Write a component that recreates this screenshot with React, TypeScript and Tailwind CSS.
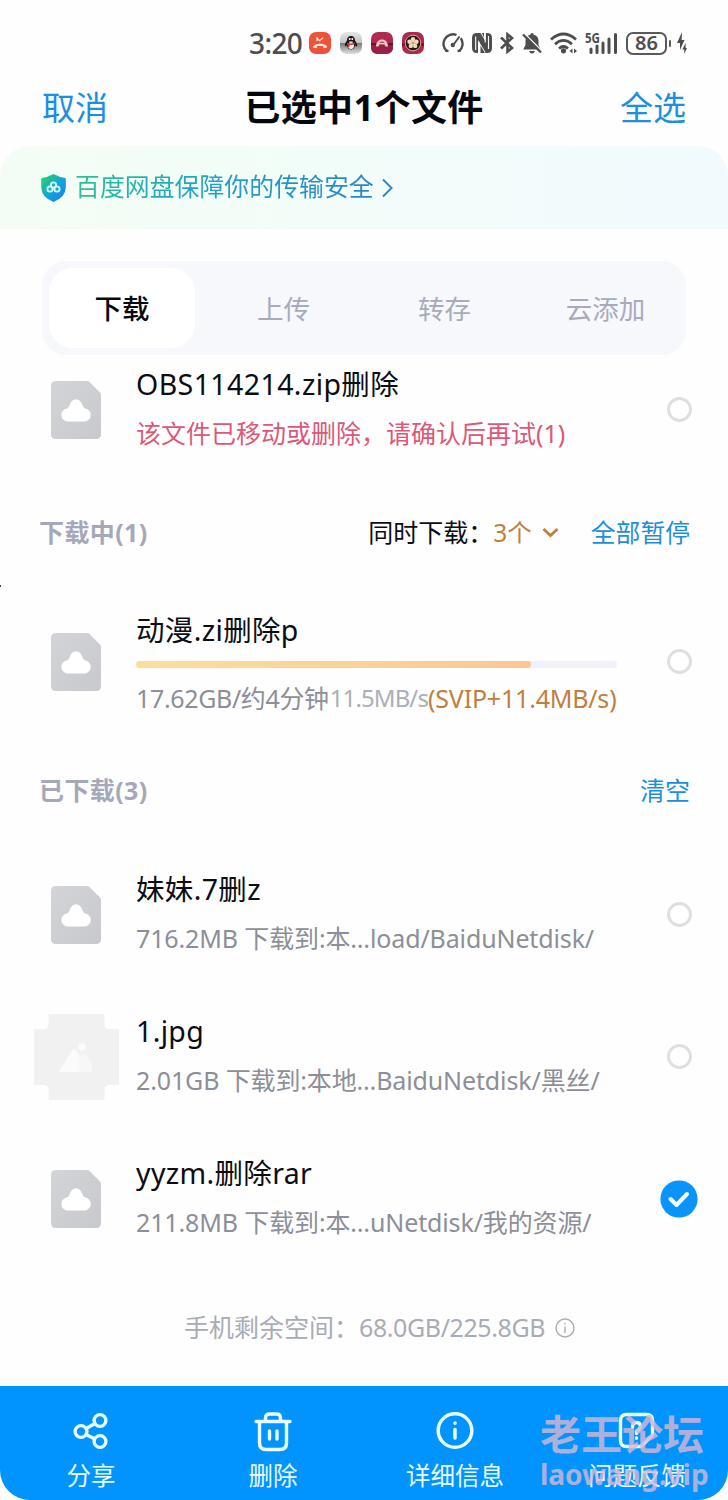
import type { ReactNode } from "react";

const FONT = "font-['Noto_Sans','Noto_Sans_CJK_SC',sans-serif]";

function StatusBar() {
  return (
    <div className="flex h-[67px] items-center pl-[249px] pt-[19px] text-[#4d4d4f]">
      <span className="w-[60px] whitespace-nowrap text-[28px] font-medium leading-[48px] tracking-[-0.6px]">3:20</span>
      {/* missed call */}
      <svg className="h-[22px] w-[22px]" viewBox="0 0 22 22">
        <rect width="22" height="22" rx="7" fill="#ee5239" />
        <path d="M4 15.500c0-5 14-5 14 0l-3.500.8-.6-2.200h-5.800l-.6 2.200z" fill="#ffe9df" />
        <path d="M8 5v4M8 6.200l2.500 2.500 3.500-3" fill="none" stroke="#ffe9df" strokeWidth="1.300" />
      </svg>
      {/* penguin */}
      <svg className="ml-[9px] h-[22px] w-[22px]" viewBox="0 0 22 22">
        <defs>
          <linearGradient id="silver" x1="0" y1="0" x2="0" y2="1">
            <stop offset="0" stopColor="#e4e5e4" />
            <stop offset=".5" stopColor="#c2c5c2" />
            <stop offset=".52" stopColor="#777b79" />
            <stop offset="1" stopColor="#dfe1df" />
          </linearGradient>
        </defs>
        <rect width="22" height="22" rx="7" fill="url(#silver)" />
        <path d="M11 4c-3 0-4 2.200-4 4.500-1.500 2-2.500 4-2 6l2-1c.5 3 2 4 4 4s3.500-1 4-4l2 1c.5-2-.5-4-2-6C15 6.200 14 4 11 4z" fill="#171719" />
        <ellipse cx="11" cy="13.500" rx="3" ry="3.500" fill="#fff" />
        <path d="M7 10.500q4 2 8 0v1.800q-4 1.500-8 0zM7.500 12h2v3h-2z" fill="#d92b2b" />
        <circle cx="9.700" cy="7" r="1" fill="#fff" />
        <circle cx="12.300" cy="7" r="1" fill="#fff" />
        <path d="M8.500 9.200h5l-2.500 1.200zM6.500 18q2-1.800 4 0zM11.500 18q2-1.800 4 0z" fill="#eea62e" />
      </svg>
      <svg className="ml-[9px] h-[22px] w-[22px]" viewBox="0 0 22 22">
        <rect width="22" height="22" rx="7" fill="#b12a52" />
        <path d="M0 11h22v2.500H0z" fill="#5c1630" />
        <path d="M0 13.500h22v1.500q0 7-7 7H7q-7 0-7-7z" fill="#982047" />
        <path d="M5 14.500c0-9.500 12-9.500 12 0h-2.500l-1-2h-5l-1 2z" fill="#f3c9bf" />
        <path d="M8 10.800q3-2.800 6 0z" fill="#b12a52" />
      </svg>
      <svg className="ml-[9px] h-[22px] w-[22px]" viewBox="0 0 22 22">
        <rect width="22" height="22" rx="7" fill="#ab2a50" />
        <path d="M0 11h22v3H0z" fill="#701a38" />
        <circle cx="11" cy="11" r="7.800" fill="#2b1416" stroke="#d9a58c" strokeWidth="1" />
        <g fill="#f4d8b8">
          <circle cx="11" cy="7.300" r="2.200" />
          <circle cx="7.500" cy="9.800" r="2.200" />
          <circle cx="14.500" cy="9.800" r="2.200" />
          <circle cx="8.800" cy="13.900" r="2.200" />
          <circle cx="13.200" cy="13.900" r="2.200" />
          <circle cx="11" cy="11" r="2.200" />
        </g>
        <circle cx="11" cy="11" r=".8" fill="#7a3d28" />
      </svg>
      {/* gauge */}
      <svg className="ml-[18px] h-[22px] w-[22px]" viewBox="0 0 22 22" fill="none" stroke="currentColor" strokeWidth="2.400">
        <path d="M5 19.200A9.500 9.500 0 0 1 14.500 3M18.800 6.200a9.500 9.500 0 0 1-1.800 13" />
        <path d="M3.200 18.300l3.300.8M18.800 18.300l-3.300.8" />
        <path d="M17.500 4.500L12 12" strokeWidth="2" />
        <circle cx="10.800" cy="13" r="2.200" fill="currentColor" stroke="none" />
      </svg>
      {/* nfc */}
      <svg className="ml-2 h-[22px] w-[20px]" viewBox="0 0 20 22">
        <path d="M5 1Q0 1 0 6v10q0 5 5 5h1V1zM4 4.500V18" fill="currentColor" />
        <path d="M15 1q5 0 5 5v10q0 5-5 5h-1.500V1z" fill="currentColor" />
        <path d="M5 1h3.500l7 11.500V21H14L6 8z" fill="currentColor" />
        <path d="M3.700 4.500V18M6.800 10v11M13.200 1v9.500M16.500 4v13" stroke="#fefefe" strokeWidth="1.100" />
        <path d="M8.500 13.500l4.500 7.500H8.500zM9.800 1h2.200v4.500z" fill="currentColor" />
      </svg>
      <svg className="ml-2 h-[22px] w-[14px]" viewBox="0 0 14 22" fill="none" stroke="currentColor" strokeWidth="2.600">
        <path d="M1 5.500L12 16l-4.500 3.700V2.300L12 6 1 16.500" />
      </svg>
      {/* muted bell */}
      <svg className="ml-2 h-[22px] w-[20px]" viewBox="0 0 20 22">
        <path d="M10 1q1.700 0 1.700 1.800Q16.500 4 16.500 9v4l2.300 4.500H1.200L3.500 13V9q0-5 4.800-6.200Q8.300 1 10 1zM7 19h6q-1 2.500-3 2.500T7 19z" fill="currentColor" />
        <path d="M2.500 1.500L20 19" stroke="#fefefe" strokeWidth="1.400" />
        <path d="M1 2.500L19 20.500" stroke="currentColor" strokeWidth="2.400" />
      </svg>
      <svg className="ml-2 h-[22px] w-[28px]" viewBox="0 0 28 22" fill="none" stroke="currentColor" strokeWidth="2.700">
        <path d="M1 7.500Q13.500-3.500 26 7.500M5 12.200q8.500-7.500 17 0M9 16.500q4.500-4 9 0" />
        <circle cx="13.500" cy="18.800" r="2.600" fill="currentColor" stroke="none" />
        <path d="M22.500 16.500v5l-3-2.500zM24 16.500v5l3-2.500z" fill="currentColor" stroke="none" />
      </svg>
      {/* 5G signal */}
      <svg className="ml-[7px] h-[22px] w-[33px] overflow-visible" viewBox="0 0 33 22">
        <text x="0" y="10.500" fontSize="14.500" fontWeight="700" textLength="15" lengthAdjust="spacingAndGlyphs" fill="currentColor">5G</text>
        <path d="M6 17v3.500M12 14v6.500M18 11v9.500M24 7v13.500M30.500 2.500v18" stroke="currentColor" strokeWidth="3" strokeLinecap="round" />
      </svg>
      <div className="ml-[8px] flex h-[23px] w-[41px] items-center justify-center rounded-[7px] border-2 border-[#5a5a5c] text-[20px] font-semibold leading-none">
        86
      </div>
      <div className="ml-[2px] h-[7px] w-[2px] rounded bg-[#5a5a5c]" />
      <svg className="ml-[6px] h-[22px] w-[10px]" viewBox="0 0 10 22" fill="currentColor">
        <path d="M5 0L0 11h3v7l4.500-10H4.600zM8.600 11L5.300 17.500h2V22L10 16H8.600z" />
      </svg>
    </div>
  );
}

function Header() {
  return (
    <div className="flex h-[79px] items-center justify-between px-[42px] pt-[3px] text-[33px] text-[#1c8fe3]">
      <span>取消</span>
      <h1 className="text-[36px] font-bold tracking-[0.4px] text-[#05070f]">已选中1个文件</h1>
      <span>全选</span>
    </div>
  );
}

function SafetyBanner() {
  return (
    <div className="flex h-[83px] items-center rounded-t-[30px] bg-linear-to-r from-[#f4fdf5] via-[#f2fdfa] to-[#f1fafd] pl-[41px]">
      <svg className="h-[28px] w-[25px]" viewBox="0 0 25 28">
        <defs>
          <linearGradient id="shield" x1="0" y1="0" x2="1" y2="1">
            <stop offset=".1" stopColor="#25cf74" />
            <stop offset=".5" stopColor="#10a9d0" />
            <stop offset=".9" stopColor="#1c7ff5" />
          </linearGradient>
        </defs>
        <path d="M12.500 0Q18 3 24 4q.8 0 .8 1.500V13q0 10-12.300 15Q.2 23 .2 13V5.500Q.2 4 1 4q6-1 11.500-4z" fill="url(#shield)" />
        <g fill="none" stroke="#d9fbff" strokeWidth="1.900">
          <circle cx="12.500" cy="11" r="2.600" />
          <circle cx="9" cy="15" r="2.600" />
          <circle cx="16" cy="15" r="2.600" />
        </g>
      </svg>
      <span className="ml-[9px] bg-linear-to-r from-[#2fbf92] via-[#259fc6] via-45% to-[#2a84c8] bg-clip-text pb-[3px] text-[24.900px] leading-[36px] text-transparent">
        百度网盘保障你的传输安全
      </span>
      <svg className="ml-[8px] h-[20px] w-[11px]" viewBox="0 0 11 20" fill="none" stroke="#3385c6" strokeWidth="2">
        <path d="M1 1.500L9.500 10 1 18.500" />
      </svg>
    </div>
  );
}

function Tabs() {
  const tab = "flex h-[80px] items-center justify-center";
  return (
    <div className="mx-[42px] mt-[32px] grid h-[94px] grid-cols-4 items-center rounded-[24px] bg-[#f7f8fc] text-[26.500px] text-[#a6abbb]">
      <div className={`${tab} ml-[7px] mr-[8px] rounded-[24px] bg-white pt-[2px] text-[27.500px] font-medium text-[#070a12]`}>下载</div>
      <div className={`${tab} pt-[3px]`}>上传</div>
      <div className={`${tab} pt-[3px]`}>转存</div>
      <div className={`${tab} pt-[3px]`}>云添加</div>
    </div>
  );
}

function FileIcon({ id }: { id: string }) {
  return (
    <svg className="h-[58px] w-[50px]" viewBox="0 0 50 58">
      <defs>
        <linearGradient id={id} x1="0" y1="0" x2="1" y2="1">
          <stop offset="0" stopColor="#d3d4d8" />
          <stop offset="1" stopColor="#c8c9cc" />
        </linearGradient>
      </defs>
      <path d="M5 0h31q1.500 0 2.500 1L49 11.500q1 1 1 2.500v39q0 5-5 5H5q-5 0-5-5V5q0-5 5-5z" fill={`url(#${id})`} />
      <path d="M16.500 40.500a6.600 6.600 0 0 1-.6-13.100Q17.500 27 18.500 24.500q2-6.300 6.500-6.300t6.500 6.300q1 2.500 2.700 2.900a6.600 6.600 0 0 1-.7 13.100z" fill="#fff" />
    </svg>
  );
}

function ImageIcon() {
  return (
    <svg className="h-[86px] w-[85px]" viewBox="0 0 85 86">
      <path d="M14.500 0h56v10q0 5 5 5H85v56h-9.500q-5 0-5 5v10h-56V76q0-5-5-5H0V15h9.500q5 0 5-5z" fill="#f1f1f1" />
      <path d="M24.500 58L38 36.500q2-2.500 4 0L57.500 58z" fill="#fbfbfb" />
      <path d="M44 45l5-4q2-1.500 3.500.5L58 50v8H46z" fill="#f7f7f7" />
      <circle cx="48" cy="33" r="3.800" fill="#fbfbfb" />
    </svg>
  );
}

function Radio({ checked }: { checked?: boolean }) {
  if (!checked) return <div className="mb-px h-[25px] w-[25px] rounded-full border-[3px] border-[#dfdfe0] bg-white" />;
  return (
    <svg className="mb-px h-[38px] w-[38px]" viewBox="0 0 38 38">
      <circle cx="19" cy="19" r="18.600" fill="#0894fb" />
      <path d="M10.500 19l6 6L27 14" fill="none" stroke="#f4fcff" strokeWidth="4" strokeLinecap="round" strokeLinejoin="round" />
    </svg>
  );
}

type RowProps = { icon: ReactNode; height?: string; pad?: string; checked?: boolean; children: ReactNode };

function Row({ icon, height = "h-[142px]", pad = "pb-[3px]", checked, children }: RowProps) {
  return (
    <div className={`flex ${height} items-center`}>
      <div className="ml-[33px] flex w-[86px] justify-center">{icon}</div>
      <div className={`ml-[17px] flex-1 whitespace-nowrap ${pad}`}>{children}</div>
      <div className="mr-[29px] flex w-[40px] justify-center">
        <Radio checked={checked} />
      </div>
    </div>
  );
}

const TITLE = "text-[28.500px] leading-[44px] tracking-[0.350px] text-[#0b0d13]";
const SUB = "mt-[5px] text-[25px] leading-[44px] tracking-[-0.130px] text-[#8c8f97]";

function BottomBar() {
  const item = "flex w-1/4 flex-col items-center pt-[24px]";
  const icon = "h-[42px] w-[42px]";
  return (
    <div className="relative flex h-[114px] rounded-b-[30px] bg-[#0194ff] text-[24.500px] leading-[36px] text-[#e9fdff]">
      <div className={item}>
        <svg className={icon} viewBox="0 0 42 42" fill="none" stroke="currentColor" strokeWidth="3.400">
          <circle cx="11" cy="21.500" r="5.900" />
          <circle cx="30" cy="10.500" r="5.900" />
          <circle cx="30" cy="31.500" r="5.900" />
          <path d="M16 18.500l9-5M16 24.500l9 4.500" />
        </svg>
        <span className="mt-[6px]">分享</span>
      </div>
      <div className={item}>
        <svg className={icon} viewBox="0 0 42 42" fill="none" stroke="currentColor" strokeWidth="3.400" strokeLinecap="round">
          <path d="M4 11.500h34M7.500 11.500V33q0 6.500 6.500 6.500h14q6.500 0 6.500-6.500V11.500M13.500 11V8q0-4 4-4h7q4 0 4 4v3M17.500 21v8M25 21v8" />
        </svg>
        <span className="mt-[6px]">删除</span>
      </div>
      <div className={item}>
        <svg className={icon} viewBox="0 0 42 42" fill="none" stroke="currentColor" strokeWidth="3.500" strokeLinecap="round">
          <circle cx="21" cy="20.500" r="16.800" />
          <path d="M21 19.500v8.500M21 13v.3" />
        </svg>
        <span className="mt-[6px]">详细信息</span>
      </div>
      <div className={item}>
        <svg className={icon} viewBox="0 0 42 42" fill="none" stroke="currentColor" strokeWidth="3.400" strokeLinecap="round">
          <path d="M25 36.500H10.500q-6 0-6-6v-20q0-6 6-6h20q6 0 6 6V25L25 36.500z" />
          <path d="M16.500 17q0-4.500 4-4.500t4 4q0 2.500-4 5v2M20.500 28v.2" />
        </svg>
        <span className="mt-[6px]">问题反馈</span>
      </div>
      {/* watermark */}
      <div className="absolute left-[540px] top-[22px] whitespace-nowrap font-bold text-[#d8b6d4]/82">
        <div className="text-[41px] leading-[53px]">老王论坛</div>
        <div className="text-[28px] leading-[27px]">laowang.vip</div>
      </div>
    </div>
  );
}

export default function App() {
  return (
    <div className={`relative flex h-[1500px] w-[728px] flex-col overflow-hidden bg-[#fefefe] ${FONT}`}>
      <StatusBar />
      <Header />
      <SafetyBanner />
      <Tabs />

      <Row icon={<FileIcon id="f1" />} height="h-[110px]">
        <div className="text-[28.500px] leading-[44px] tracking-[0.400px] text-[#0b0d13]">OBS114214.zip删除</div>
        <div className="mt-[5px] text-[25px] leading-[44px] text-[#dc5878]">该文件已移动或删除，请确认后再试(1)</div>
      </Row>

      <div className="flex h-[126px] items-center pl-[39px] pr-[38px] pt-[10px] text-[25px]">
        <span className="font-bold tracking-[0.400px] text-[#a4a8b9]">下载中(1)</span>
        <span className="ml-auto text-[#0b0d13]">同时下载：</span>
        <span className="text-[24.500px] text-[#c07f3d]">3个</span>
        <svg className="ml-[10px] h-[12px] w-[17px]" viewBox="0 0 17 12" fill="none" stroke="#c07f3d" strokeWidth="2.800">
          <path d="M1.500 2L8.500 8.500 15.500 2" />
        </svg>
        <span className="ml-[32px] text-[24.800px] text-[#1c8fdc]">全部暂停</span>
      </div>
      <div className="absolute left-0 top-[585px] h-[2px] w-px bg-[#444]" />

      <Row icon={<FileIcon id="f2" />} pad="pt-[4px]">
        <div className={TITLE}>动漫.zi删除p</div>
        <div className="mt-[9px] h-[7px] w-[481px] rounded-full bg-[#f1f1f9]">
          <div className="h-full w-[395px] rounded-full bg-linear-to-r from-[#fbe09a] to-[#f9c891]" />
        </div>
        <div className="mt-[8px] flex text-[25px] leading-[44px] text-[#8c8f97]">
          <span className="w-[194px] tracking-[-0.350px]">17.62GB/约4分钟</span>
          <span className="flex w-[98px] justify-end overflow-hidden text-[24px] tracking-[-0.900px] text-[#abafb7]">11.5MB/s</span>
          <span className="tracking-[-0.200px] text-[#bf7f40]">(SVIP+11.4MB/s)</span>
        </div>
      </Row>

      <div className="flex h-[111px] items-center justify-between pl-[39px] pr-[38px] pt-[5px] text-[25px]">
        <span className="font-bold tracking-[0.400px] text-[#a4a8b9]">已下载(3)</span>
        <span className="text-[#1c8fdc]">清空</span>
      </div>

      <Row icon={<FileIcon id="f3" />}>
        <div className={TITLE}>妹妹.7删z</div>
        <div className={SUB}>716.2MB 下载到:本…load/BaiduNetdisk/</div>
      </Row>
      <Row icon={<ImageIcon />}>
        <div className={TITLE}>1.jpg</div>
        <div className={SUB}>2.01GB 下载到:本地…BaiduNetdisk/黑丝/</div>
      </Row>
      <Row icon={<FileIcon id="f4" />} checked>
        <div className={TITLE}>yyzm.删除rar</div>
        <div className={SUB}>211.8MB 下载到:本…uNetdisk/我的资源/</div>
      </Row>

      <div className="flex h-[116px] items-center pl-[184px] text-[25px] text-[#a9acb5]">
        <span>手机剩余空间：</span>
        <span className="tracking-[-0.400px]">68.0GB/225.8GB</span>
        <svg className="ml-[10px] h-[20px] w-[20px]" viewBox="0 0 20 20" fill="none" stroke="#a9acb5" strokeWidth="1.400">
          <circle cx="10" cy="10" r="9" />
          <path d="M10 8.500V15M10 5v1.500" />
        </svg>
      </div>
      <BottomBar />
    </div>
  );
}
